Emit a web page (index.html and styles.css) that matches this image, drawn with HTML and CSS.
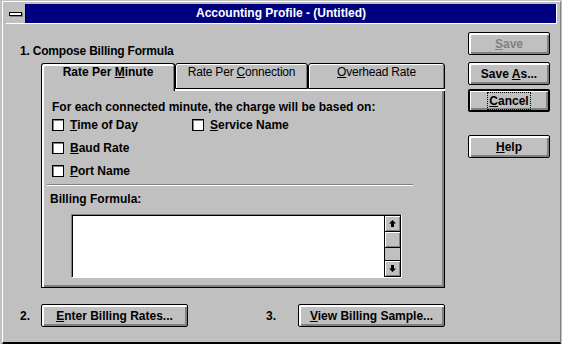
FILE: index.html
```html
<!DOCTYPE html>
<html lang="en">
<head>
    <meta charset="UTF-8">
    <title>Accounting Profile - (Untitled)</title>
    <link rel="stylesheet" href="styles.css">
</head>
<body>

<div class="window">
  <div class="frame">
    <div class="titlebar">
        <div class="sysmenu"><span></span></div>
        <div class="title">Accounting Profile - (Untitled)</div>
    </div>

    <div class="client">
        <div class="main">
            <div class="heading">1. Compose Billing Formula</div>

            <div class="tabset">
                <div class="tabs">
                    <div class="tab active"><div class="tab-face">Rate Per <u>M</u>inute</div></div>
                    <div class="tab"><div class="tab-face">Rate Per <u>C</u>onnection</div></div>
                    <div class="tab"><div class="tab-face"><u>O</u>verhead Rate</div></div>
                </div>
                <div class="panel">
                    <div class="intro">For each connected minute, the charge will be based on:</div>
                    <div class="options">
                        <label class="option"><span class="check"></span><span><u>T</u>ime of Day</span></label>
                        <label class="option"><span class="check"></span><span><u>S</u>ervice Name</span></label>
                        <label class="option"><span class="check"></span><span><u>B</u>aud Rate</span></label>
                        <span></span>
                        <label class="option"><span class="check"></span><span><u>P</u>ort Name</span></label>
                    </div>
                    <div class="sep"></div>
                    <div class="formula-label">Billing Formula:</div>
                    <div class="memo">
                        <div class="memo-text"></div>
                        <div class="scrollbar">
                            <div class="sb-btn sb-up">
                                <svg width="7" height="7" viewBox="0 0 7 7"><polygon points="3.5,0 7,3.5 5,3.5 5,7 2,7 2,3.5 0,3.5" fill="#000"/></svg>
                            </div>
                            <div class="sb-thumb"></div>
                            <div class="sb-track"></div>
                            <div class="sb-btn sb-down">
                                <svg width="7" height="7" viewBox="0 0 7 7"><polygon points="2,0 5,0 5,3.5 7,3.5 3.5,7 0,3.5 2,3.5" fill="#000"/></svg>
                            </div>
                        </div>
                    </div>
                </div>
            </div>

            <div class="steps">
                <span class="step-num">2.</span>
                <button class="btn wide"><u>E</u>nter Billing Rates...</button>
                <span class="step-num second">3.</span>
                <button class="btn wide"><u>V</u>iew Billing Sample...</button>
            </div>
        </div>

        <div class="side">
            <button class="btn disabled"><u>S</u>ave</button>
            <button class="btn save-as">Save <u>A</u>s...</button>
            <button class="btn default"><span class="focus"><u>C</u>ancel</span></button>
            <button class="btn help"><u>H</u>elp</button>
        </div>
    </div>
  </div>
</div>

</body>
</html>
```

FILE: styles.css
```css
body {
    margin: 0;
    background: #c0c0c0;
    font: bold 12px/14px "Liberation Sans", Arial, sans-serif;
    color: #000;
}
.window {
    width: 562px;
    height: 344px;
    box-sizing: border-box;
    padding: 1px 1px 0 2px;
}
.frame {
    height: 100%;
    box-sizing: border-box;
    border-left: 1px solid #fff;
    border-top: 1px solid #fff;
    border-right: 1px solid #808080;
    border-bottom: 2px solid #000;
    padding: 2px 3px 0 3px;
}

/* title bar */
.titlebar {
    display: flex;
    height: 20px;
    box-sizing: border-box;
    background: #000080;
    border-right: 1px solid #fff;
    border-bottom: 1px solid #fff;
}
.sysmenu {
    width: 20px;
    box-sizing: border-box;
    background: #c0c0c0;
    border-right: 1px solid #000;
    display: flex;
    align-items: center;
    justify-content: center;
}
.sysmenu span {
    width: 13px;
    height: 4px;
    box-sizing: border-box;
    border: 1px solid #000;
    background: #fff;
    box-shadow: 1px 1px 0 #808080;
}
.title {
    flex: 1;
    color: #fff;
    text-align: center;
    line-height: 19px;
    padding-right: 20px;
}

/* body of the dialog */
.client {
    display: flex;
}
.main {
    width: 426px;
    padding: 20px 0 0 14px;
}
.heading {
    letter-spacing: -0.2px;
}
.tabset {
    margin: 5px 0 0 21px;
    width: 404px;
}
.tabs {
    display: grid;
    grid-template-columns: 134px 133px 1fr;
}
.tab {
    border-bottom: 2px solid #fff;
}
.tab-face {
    height: 26px;
    box-sizing: border-box;
    border: 1px solid #000;
    border-radius: 3px 3px 0 0;
    padding-top: 1px;
    text-align: center;
    font-weight: normal;
    letter-spacing: -0.2px;
    box-shadow: inset 1px 1px #fff, inset -1px 0 #808080;
}
.tab.active {
    border-bottom: none;
}
.tab.active .tab-face {
    height: 28px;
    border-bottom: none;
    font-weight: bold;
    letter-spacing: 0;
    box-shadow: inset 2px 2px #fff, inset -1px 0 #808080;
}
.panel {
    height: 197px;
    box-sizing: border-box;
    border: 1px solid #000;
    border-top: none;
    box-shadow: inset 2px 0 #fff, inset -2px -2px #808080;
    padding: 9px 31px 0 10px;
}
.options {
    display: grid;
    grid-template-columns: 140px auto;
    row-gap: 9px;
    margin-top: 4px;
}
.option {
    display: flex;
    align-items: center;
    gap: 6px;
    height: 14px;
}
.check {
    width: 12px;
    height: 12px;
    box-sizing: border-box;
    border: 1px solid #000;
    background: #fff;
    box-shadow: inset 1px 1px #808080;
}
.sep {
    margin: 6px 0 0 -5px;
    border-top: 1px solid #808080;
    border-bottom: 1px solid #fff;
}
.formula-label {
    margin: 6px 0 0 -2px;
}
.memo {
    display: flex;
    width: 331px;
    height: 64px;
    box-sizing: border-box;
    margin: 8px 0 0 19px;
    border: 1px solid;
    border-color: #808080 #fff #fff #808080;
}
.memo-text {
    flex: 1;
    background: #fff;
    border-top: 1px solid #000;
    border-left: 1px solid #000;
}
.scrollbar {
    width: 17px;
    box-sizing: border-box;
    border: 1px solid #000;
    display: flex;
    flex-direction: column;
}
.sb-btn {
    height: 16px;
    box-sizing: border-box;
    display: flex;
    align-items: center;
    justify-content: center;
    box-shadow: inset 1px 1px #fff, inset -1px -1px #808080;
}
.sb-up {
    border-bottom: 1px solid #000;
}
.sb-down {
    border-top: 1px solid #000;
}
.sb-thumb {
    height: 16px;
    box-sizing: border-box;
    border-bottom: 1px solid #000;
    box-shadow: inset 1px 1px #fff, inset -1px -1px #808080;
}
.sb-track {
    flex: 1;
}

/* push buttons */
.btn {
    box-sizing: border-box;
    height: 23px;
    padding: 0;
    border: 1px solid #000;
    border-radius: 2px;
    background: #c0c0c0;
    box-shadow: inset 2px 2px #fff, inset -2px -2px #808080;
    font: inherit;
    color: #000;
}
.btn.disabled {
    color: #808080;
}
.btn.default {
    border-width: 2px;
    box-shadow: inset 1px 1px #fff, inset -2px -2px #808080;
}
.focus {
    outline: 1px dotted #000;
    outline-offset: 1px;
}
.steps {
    display: flex;
    align-items: center;
    margin-top: 16px;
}
.step-num {
    width: 21px;
    line-height: 14px;
}
.step-num.second {
    width: 32px;
    margin-left: 78px;
}
.btn.wide {
    width: 147px;
}
.side {
    display: flex;
    flex-direction: column;
    width: 82px;
    padding: 8px 0 0 22px;
}
.side .btn {
    width: 82px;
}
.save-as {
    margin-top: 7px;
}
.btn.default {
    margin-top: 4px;
}
.help {
    margin-top: 23px;
}
```
